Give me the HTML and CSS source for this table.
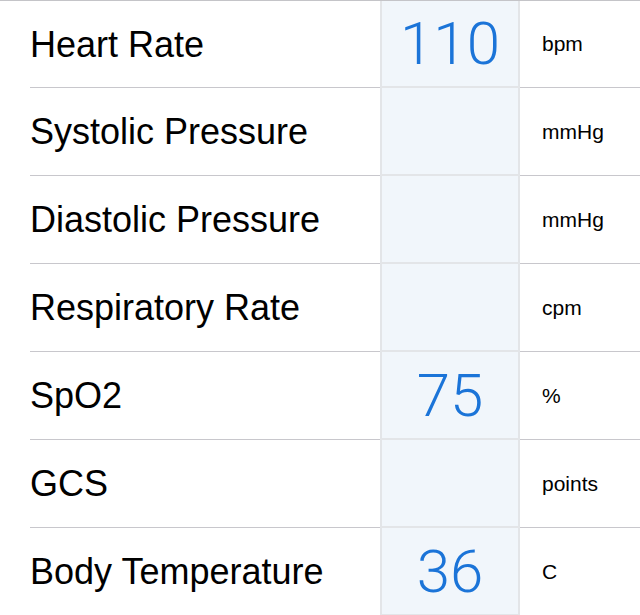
FILE: index.html
```html
<!DOCTYPE html>
<html>
<head>
<meta charset="utf-8">
<link rel="stylesheet" href="styles.css">
</head>
<body>
<div class="list">
  <div class="row"><div class="label">Heart Rate</div><div class="value">110</div><div class="unit">bpm</div></div>
  <div class="row"><div class="label">Systolic Pressure</div><div class="value"></div><div class="unit">mmHg</div></div>
  <div class="row"><div class="label">Diastolic Pressure</div><div class="value"></div><div class="unit">mmHg</div></div>
  <div class="row"><div class="label">Respiratory Rate</div><div class="value"></div><div class="unit">cpm</div></div>
  <div class="row"><div class="label">SpO2</div><div class="value">75</div><div class="unit">%</div></div>
  <div class="row"><div class="label">GCS</div><div class="value"></div><div class="unit">points</div></div>
  <div class="row"><div class="label">Body Temperature</div><div class="value">36</div><div class="unit">C</div></div>
</div>
</body>
</html>
```
FILE: styles.css
```css
html, body {
  margin: 0;
  padding: 0;
  background: #fff;
  overflow: hidden;
}
.list {
  border-top: 1px solid #c4c4c8;
  padding-left: 30px;
  font-family: "Liberation Sans", Arial, sans-serif;
  color: #000;
}
.row {
  display: grid;
  grid-template-columns: 350px 140px 1fr;
  height: 88px;
  box-sizing: border-box;
}
.row:first-child {
  height: 87px;
}
.label, .unit {
  display: flex;
  align-items: center;
  border-bottom: 1px solid #c8c7cc;
}
.label {
  font-size: 36px;
  padding-top: 1px;
}
.unit {
  font-size: 21px;
  padding-left: 22px;
}
.value {
  display: flex;
  align-items: center;
  justify-content: center;
  background: #f1f6fb;
  border-left: 2px solid #e3e5e8;
  border-right: 2px solid #e3e5e8;
  border-bottom: 2px solid #e3e5e8;
  font-family: Roboto, "Liberation Sans", sans-serif;
  font-weight: 300;
  font-size: 60px;
  color: #1b74d8;
}
```
